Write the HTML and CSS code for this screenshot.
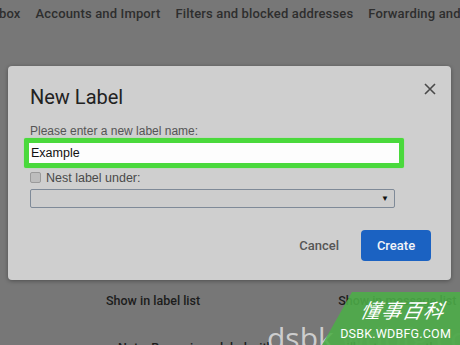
FILE: index.html
```html
<!DOCTYPE html>
<html>
<head>
<meta charset="utf-8">
<link rel="stylesheet" href="styles.css">
</head>
<body>
<div class="page">
  <nav class="tabs">
    <span class="tab first">box</span>
    <span class="tab">Accounts and Import</span>
    <span class="tab">Filters and blocked addresses</span>
    <span class="tab">Forwarding and POP/IMAP</span>
  </nav>
  <div class="content">
    <div class="cols">
      <span class="col c1">Show in label list</span>
      <span class="col c2">Show in message list</span>
    </div>
    <div class="note">Note: Removing a label with messages will not remove them.</div>
  </div>
</div>

<div class="dialog">
  <div class="head">
    <h1 class="title">New Label</h1>
    <svg class="close" width="12" height="12" viewBox="0 0 12 12"><path d="M1 1L11 11M11 1L1 11" stroke="#4a4a4a" stroke-width="1.6"/></svg>
  </div>
  <div class="prompt">Please enter a new label name:</div>
  <div class="highlight"><div class="input">Example</div></div>
  <div class="nest"><span class="check"></span><span>Nest label under:</span></div>
  <div class="select"><span class="arrow">▼</span></div>
  <div class="actions">
    <span class="cancel">Cancel</span>
    <span class="create">Create</span>
  </div>
</div>

<div class="wm-text">dsbk<span class="wm-faint">.wdbfg.com</span></div>
<div class="watermark">
  <div class="wm-cn">懂事百科</div>
  <div class="wm-en">DSBK.WDBFG.COM</div>
</div>
</body>
</html>
```
FILE: styles.css
```css
html, body {
  margin: 0;
  padding: 0;
  width: 460px;
  height: 345px;
  overflow: hidden;
  background: #777777;
  font-family: Roboto, "Liberation Sans", Arial, sans-serif;
}
.page {
  display: flex;
  flex-direction: column;
  height: 345px;
  overflow: hidden;
}
.tabs {
  flex: none;
  display: flex;
  gap: 15px;
  white-space: nowrap;
  height: 26px;
  align-items: center;
  margin-left: -1px;
}
.tab {
  font-size: 13px;
  font-weight: 500;
  color: #2e2e2e;
  letter-spacing: 0.15px;
}
.content {
  flex: none;
  display: flex;
  flex-direction: column;
  padding-top: 265px;
}
.cols {
  flex: none;
  display: flex;
  height: 18px;
  align-items: center;
}
.col {
  font-size: 12.5px;
  font-weight: 500;
  color: #1c1c1c;
  white-space: nowrap;
}
.c1 { margin-left: 106px; }
.c2 { margin-left: 138px; }
.note {
  flex: none;
  margin-top: 31px;
  margin-left: 118px;
  font-size: 12.5px;
  font-weight: 500;
  color: #1c1c1c;
  white-space: nowrap;
}
.dialog {
  position: absolute;
  left: 8px;
  top: 66px;
  width: 443px;
  height: 214px;
  box-sizing: border-box;
  background: #cfcfcf;
  border-radius: 4px;
  box-shadow: 0 1px 4px rgba(0,0,0,0.35);
  padding: 0 0 0 22px;
  display: flex;
  flex-direction: column;
}
.head {
  display: flex;
  justify-content: space-between;
  align-items: flex-start;
  height: 50px;
}
.title {
  margin: 19px 0 0 0;
  font-size: 20px;
  font-weight: 400;
  color: #222;
  line-height: 24px;
}
.close {
  margin: 17px 15px 0 0;
}
.prompt {
  font-family: "Liberation Sans", Arial, sans-serif;
  font-size: 12px;
  color: #555;
  line-height: 14px;
  margin-top: 8px;
}
.highlight {
  margin: 0 0 0 -6px;
  width: 380px;
  height: 30px;
  box-sizing: border-box;
  background: #4ad93c;
  border-radius: 2px;
  padding: 5px;
  box-shadow: 0 0 1px #6ef060;
}
.input {
  background: #fdfdfd;
  height: 20px;
  font-family: "Liberation Sans", Arial, sans-serif;
  font-size: 12.5px;
  color: #111;
  line-height: 20px;
  padding-left: 2px;
}
.nest {
  display: flex;
  align-items: center;
  gap: 5px;
  margin-top: 1px;
  height: 17px;
  font-family: "Liberation Sans", Arial, sans-serif;
  font-size: 12.5px;
  color: #4a4a4a;
}
.check {
  width: 9px;
  height: 9px;
  border: 1px solid #9a9a9a;
  border-radius: 2px;
  background: #bdbdbd;
}
.select {
  margin-top: 3px;
  width: 365px;
  height: 19px;
  box-sizing: border-box;
  border: 1.5px solid #7f8a98;
  border-radius: 2px;
  background: #cdcdcd;
  display: flex;
  justify-content: flex-end;
  align-items: center;
  padding-right: 5px;
}
.arrow {
  font-size: 8px;
  color: #111;
}
.actions {
  display: flex;
  justify-content: flex-end;
  align-items: center;
  gap: 22px;
  margin-top: 22px;
  padding-right: 20px;
}
.cancel {
  font-size: 13px;
  font-weight: 500;
  color: #565656;
}
.create {
  width: 70px;
  height: 31px;
  border-radius: 4px;
  background: #1b62c2;
  color: #f2f4f8;
  font-size: 13px;
  font-weight: 500;
  display: flex;
  align-items: center;
  justify-content: center;
}
.watermark {
  position: absolute;
  left: 322px;
  top: 292px;
  width: 138px;
  height: 53px;
  background: rgba(76, 174, 72, 0.88);
  clip-path: polygon(30px 0, 138px 0, 138px 53px, 0 53px);
  display: flex;
  flex-direction: column;
  align-items: flex-end;
  padding-right: 9px;
  box-sizing: border-box;
}
.wm-cn {
  font-family: "Noto Sans CJK SC", sans-serif;
  font-style: italic;
  font-size: 20px;
  line-height: 22px;
  color: #fff;
  margin-top: 7px;
  letter-spacing: 1px;
  transform: skewX(-12deg);
  margin-right: 6px;
}
.wm-en {
  font-size: 12.5px;
  color: #fff;
  margin-top: 5px;
  letter-spacing: 0.2px;
}
.wm-text {
  position: absolute;
  left: 267px;
  top: 320px;
  font-family: "Open Sans", sans-serif;
  font-size: 30px;
  line-height: 36px;
  color: rgba(222, 222, 222, 0.85);
  white-space: nowrap;
}
.wm-faint {
  color: rgba(200, 200, 200, 0.3);
}
```
